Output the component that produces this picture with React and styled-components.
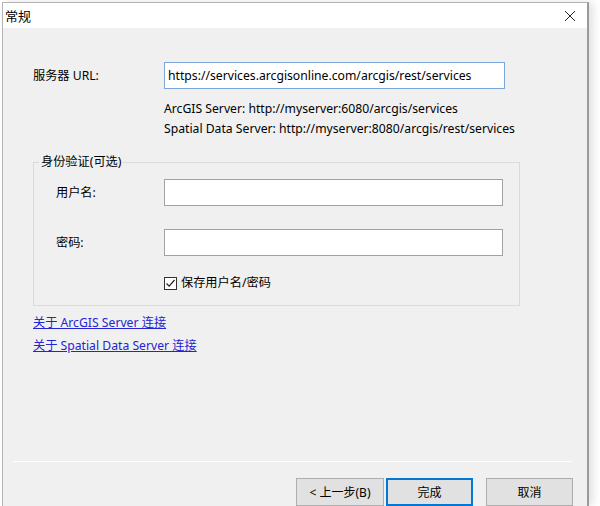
import React from "react";
import styled, { createGlobalStyle } from "styled-components";

const GlobalStyle = createGlobalStyle`
    html, body {
        margin: 0;
        padding: 0;
        background: #ffffff;
    }
    body {
        width: 600px;
        height: 506px;
        overflow: hidden;
        font-family: "Noto Sans", "Noto Sans CJK SC", sans-serif;
        font-size: 12.2px;
        color: #000;
    }
`;

const Page = styled.div`
    width: 600px;
    height: 506px;
    padding: 2px 0 0 2px;
    box-sizing: border-box;
`;

const Window = styled.div`
    width: 587px;
    height: 504px;
    box-sizing: border-box;
    border-left: 1px solid #b4b4b4;
    border-top: 1px solid #b4b4b4;
    border-right: 2px solid #9a9a9a;
    background: #f0f0f0;
    display: flex;
    flex-direction: column;
    overflow: hidden;
    box-shadow: 4px 0 8px rgba(0, 0, 0, 0.12);
`;

const TitleBar = styled.div`
    height: 25px;
    background: #ffffff;
    display: flex;
    align-items: center;
    justify-content: space-between;
    padding: 0 11px 0 2px;
    font-size: 13px;
    flex-shrink: 0;
`;

const CloseButton = styled.span`
    display: flex;
    width: 12px;
    height: 12px;
`;

const Body = styled.div`
    flex: 1;
    display: flex;
    flex-direction: column;
    padding: 34px 0 0 30px;
`;

const Row = styled.div`
    display: grid;
    grid-template-columns: ${(p) => p.$labelWidth}px auto;
    align-items: center;
    margin-top: ${(p) => p.$top || 0}px;
`;

const Label = styled.span`
    line-height: 20px;
`;

const TextBox = styled.div`
    box-sizing: border-box;
    width: ${(p) => p.$width}px;
    height: ${(p) => p.$height}px;
    background: #ffffff;
    border: 1px solid ${(p) => (p.$focused ? "#7aa6d9" : "#a2a2a2")};
    padding: 0 3px;
    display: flex;
    align-items: center;
    white-space: nowrap;
    overflow: hidden;
`;

const Hints = styled.div`
    margin: 10px 0 0 131px;
    line-height: 20px;
    white-space: nowrap;
`;

const Group = styled.fieldset`
    width: 487px;
    box-sizing: border-box;
    margin: 14px 0 0 0;
    padding: 8px 16px 13px 22px;
    border: 1px solid #dadada;
    border-radius: 0;
    min-width: 0;
`;

const Legend = styled.legend`
    margin-left: -17px;
    padding: 0 2px;
    line-height: 18px;
`;

const CheckRow = styled.label`
    display: flex;
    align-items: center;
    gap: 4px;
    margin: 18px 0 0 108px;
    line-height: 18px;
`;

const CheckBox = styled.span`
    width: 13px;
    height: 13px;
    box-sizing: border-box;
    border: 1px solid #333;
    background: #ffffff;
    display: flex;
    align-items: center;
    justify-content: center;
`;

const Links = styled.div`
    display: flex;
    flex-direction: column;
    margin-top: 5px;
`;

const Link = styled.a`
    color: #2424d4;
    text-decoration: underline;
    line-height: 23px;
    cursor: pointer;
    width: max-content;
`;

const Footer = styled.div`
    margin-top: auto;
    height: 45px;
    flex-shrink: 0;
    display: flex;
    flex-direction: column;
`;

const Separator = styled.div`
    height: 1px;
    margin: 0 15px 0 10px;
    background: #c8c8c8;
    border-bottom: 1px solid #ffffff;
`;

const ButtonRow = styled.div`
    display: flex;
    justify-content: flex-end;
    padding: 16px 14px 0 0;
`;

const Button = styled.button`
    width: ${(p) => p.$width || 87}px;
    height: 28px;
    box-sizing: border-box;
    margin-left: ${(p) => p.$gap || 0}px;
    background: #e1e1e1;
    border: ${(p) => (p.$primary ? "2px solid #0078d7" : "1px solid #adadad")};
    font-family: "Noto Sans", "Noto Sans CJK SC", sans-serif;
    font-size: 12px;
    color: #000;
    padding: 0;
`;

function App() {
    return (
        <>
            <GlobalStyle />
            <Page>
                <Window>
                    <TitleBar>
                        <span>常规</span>
                        <CloseButton>
                            <svg width="12" height="12" viewBox="0 0 12 12">
                                <path d="M1 1 L11 11 M11 1 L1 11" stroke="#222" strokeWidth="1" fill="none" />
                            </svg>
                        </CloseButton>
                    </TitleBar>
                    <Body>
                        <Row $labelWidth={131}>
                            <Label>服务器 URL:</Label>
                            <TextBox $width={341} $height={27} $focused>
                                https://services.arcgisonline.com/arcgis/rest/services
                            </TextBox>
                        </Row>
                        <Hints>
                            <div>ArcGIS Server: http://myserver:6080/arcgis/services</div>
                            <div>Spatial Data Server: http://myserver:8080/arcgis/rest/services</div>
                        </Hints>
                        <Group>
                            <Legend>身份验证(可选)</Legend>
                            <Row $labelWidth={108}>
                                <Label>用户名:</Label>
                                <TextBox $width={339} $height={27} />
                            </Row>
                            <Row $labelWidth={108} $top={23}>
                                <Label>密码:</Label>
                                <TextBox $width={339} $height={27} />
                            </Row>
                            <CheckRow>
                                <CheckBox>
                                    <svg width="11" height="11" viewBox="0 0 11 11">
                                        <path d="M1.5 5.5 L4.2 8.2 L9.5 2" stroke="#222" strokeWidth="1.2" fill="none" />
                                    </svg>
                                </CheckBox>
                                保存用户名/密码
                            </CheckRow>
                        </Group>
                        <Links>
                            <Link>关于 ArcGIS Server 连接</Link>
                            <Link>关于 Spatial Data Server 连接</Link>
                        </Links>
                    </Body>
                    <Footer>
                        <Separator />
                        <ButtonRow>
                            <Button $width={88}>&lt; 上一步(B)</Button>
                            <Button $primary $gap={2}>完成</Button>
                            <Button $gap={13}>取消</Button>
                        </ButtonRow>
                    </Footer>
                </Window>
            </Page>
        </>
    );
}

export default App;
